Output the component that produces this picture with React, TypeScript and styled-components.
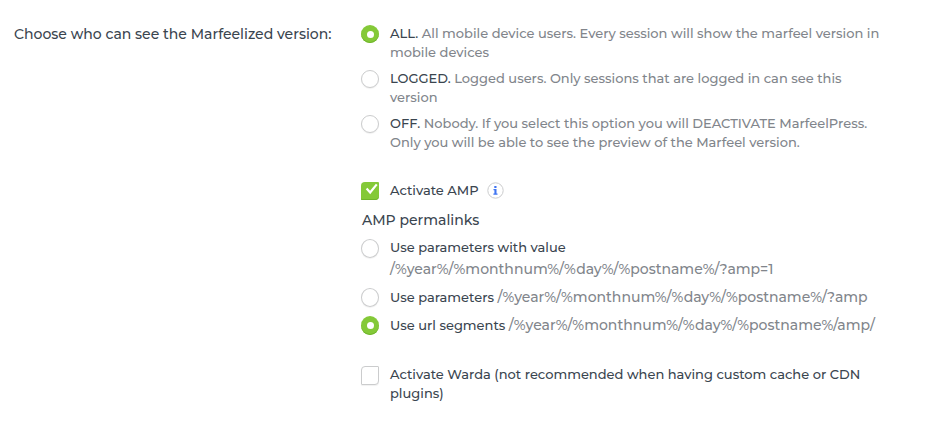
import React from "react";
import styled, { createGlobalStyle, css } from "styled-components";

const GlobalStyle = createGlobalStyle`
  body { margin: 0; background: #fff; }
  * { box-sizing: border-box; }
`;

const Page = styled.main`
  display: flex;
  width: 950px;
  height: 422px;
  padding-top: 24px;
  font-family: Montserrat, Inter, sans-serif;
  font-size: 13px;
  font-weight: 500;
  line-height: 19px;
  color: #3a454f;
  overflow: hidden;
`;

const Question = styled.div`
  flex: 0 0 361px;
  padding-left: 14px;
  font-size: 14px;
  line-height: 20px;
`;

const Options = styled.div`
  display: flex;
  flex-direction: column;
  width: 560px;
`;

const Group = styled.div<{ $gap: number; $top?: number }>`
  display: flex;
  flex-direction: column;
  gap: ${(p) => p.$gap}px;
  margin-top: ${(p) => p.$top ?? 0}px;
`;

const Row = styled.label`
  display: flex;
  align-items: flex-start;
  gap: 11px;
`;

const Copy = styled.div`
  display: flex;
  flex-direction: column;
`;

const Line = styled.div<{ $height?: number; $leading?: number }>`
  height: ${(p) => p.$height ?? 19}px;
  line-height: ${(p) => p.$leading ?? p.$height ?? 19}px;
  white-space: pre;
`;

const Text = styled.span<{ $muted?: boolean; $large?: boolean }>`
  ${(p) => p.$muted && css`color: #81858b;`}
  ${(p) => p.$large && css`font-size: 14px;`}
`;

const Heading = styled.div`
  margin: 10px 0 0 1px;
  font-size: 14px;
  line-height: 20px;
`;

const Radio = styled.span<{ $on?: boolean; $tall?: boolean }>`
  display: flex;
  align-items: center;
  justify-content: center;
  flex: none;
  width: 18px;
  height: ${(p) => (p.$tall ? 19 : 18)}px;
  margin-top: 1px;
  border-radius: 50%;
  border: 1px solid #cbcccd;
  background: #fff;
  box-shadow: 0 1px 1px rgba(0, 0, 0, 0.06);
  ${(p) =>
    p.$on &&
    css`
      border: 0;
      background: #84c938;
      box-shadow: inset 0 -1px 0 #70b52c;
      &::after {
        content: "";
        width: 7px;
        height: 7px;
        border-radius: 50%;
        background: #fff;
      }
    `}
`;

const Checkbox = styled.span<{ $on?: boolean }>`
  flex: none;
  width: 18px;
  height: 19px;
  margin-top: 1px;
  border-radius: 4px 1px 4px 1px;
  border: 1px solid #cbcccd;
  background: #fff;
  box-shadow: 0 1px 1px rgba(0, 0, 0, 0.06);
  ${(p) =>
    p.$on &&
    css`
      border: 0;
      height: 18px;
      background: #84c938;
      box-shadow: inset 0 -1px 0 #70b52c;
    `}
  svg { display: block; }
`;

const WithInfo = styled.div`
  display: flex;
  align-items: center;
  width: 113.5px;
  justify-content: space-between;
`;

const Tick = () => (
  <svg width="18" height="18" viewBox="0 0 18 18">
    <path d="M4.8 7.2 6.4 5.8 9.1 8.7 14.9 1.7 16.6 3 9.2 12.2z" fill="#fff" />
  </svg>
);

const Info = () => (
  <svg width="17" height="17" viewBox="0 0 17 17">
    <circle cx="8.5" cy="8.5" r="7.7" fill="#fff" stroke="#cbcccd" />
    <path d="M7.3 3.9h2.2v2.1H7.3zM6.5 7h3v4.4h1v1.4H6.4v-1.4h1V8.3h-.9z" fill="#3f74f2" />
  </svg>
);

export default function App() {
  return (
    <>
      <GlobalStyle />
      <Page>
        <Question>Choose who can see the Marfeelized version:</Question>
        <Options>
          <Group $gap={7}>
            <Row>
              <Radio $on />
              <Copy>
                <Line>ALL. <Text $muted>All mobile device users. Every session will show the marfeel version in</Text></Line>
                <Line><Text $muted>mobile devices</Text></Line>
              </Copy>
            </Row>
            <Row>
              <Radio />
              <Copy>
                <Line>LOGGED. <Text $muted>Logged users. Only sessions that are logged in can see this</Text></Line>
                <Line><Text $muted>version</Text></Line>
              </Copy>
            </Row>
            <Row>
              <Radio />
              <Copy>
                <Line>OFF. <Text $muted>Nobody. If you select this option you will DEACTIVATE MarfeelPress.</Text></Line>
                <Line><Text $muted>Only you will be able to see the preview of the Marfeel version.</Text></Line>
              </Copy>
            </Row>
          </Group>
          <Group $gap={0} $top={29}>
            <Row>
              <Checkbox $on><Tick /></Checkbox>
              <WithInfo><Text>Activate AMP</Text><Info /></WithInfo>
            </Row>
          </Group>
          <Heading>AMP permalinks</Heading>
          <Group $gap={8} $top={8}>
            <Row>
              <Radio $tall />
              <Copy>
                <Line>Use parameters with value</Line>
                <Line $height={22} $leading={24}><Text $muted $large>/%year%/%monthnum%/%day%/%postname%/?amp=1</Text></Line>
              </Copy>
            </Row>
            <Row>
              <Radio $tall />
              <Line $height={20}>Use parameters <Text $muted $large>/%year%/%monthnum%/%day%/%postname%/?amp</Text></Line>
            </Row>
            <Row>
              <Radio $on $tall />
              <Line $height={20}>Use url segments <Text $muted $large>/%year%/%monthnum%/%day%/%postname%/amp/</Text></Line>
            </Row>
          </Group>
          <Group $gap={0} $top={30}>
            <Row>
              <Checkbox />
              <Copy>
                <Line>Activate Warda (not recommended when having custom cache or CDN</Line>
                <Line>plugins)</Line>
              </Copy>
            </Row>
          </Group>
        </Options>
      </Page>
    </>
  );
}
